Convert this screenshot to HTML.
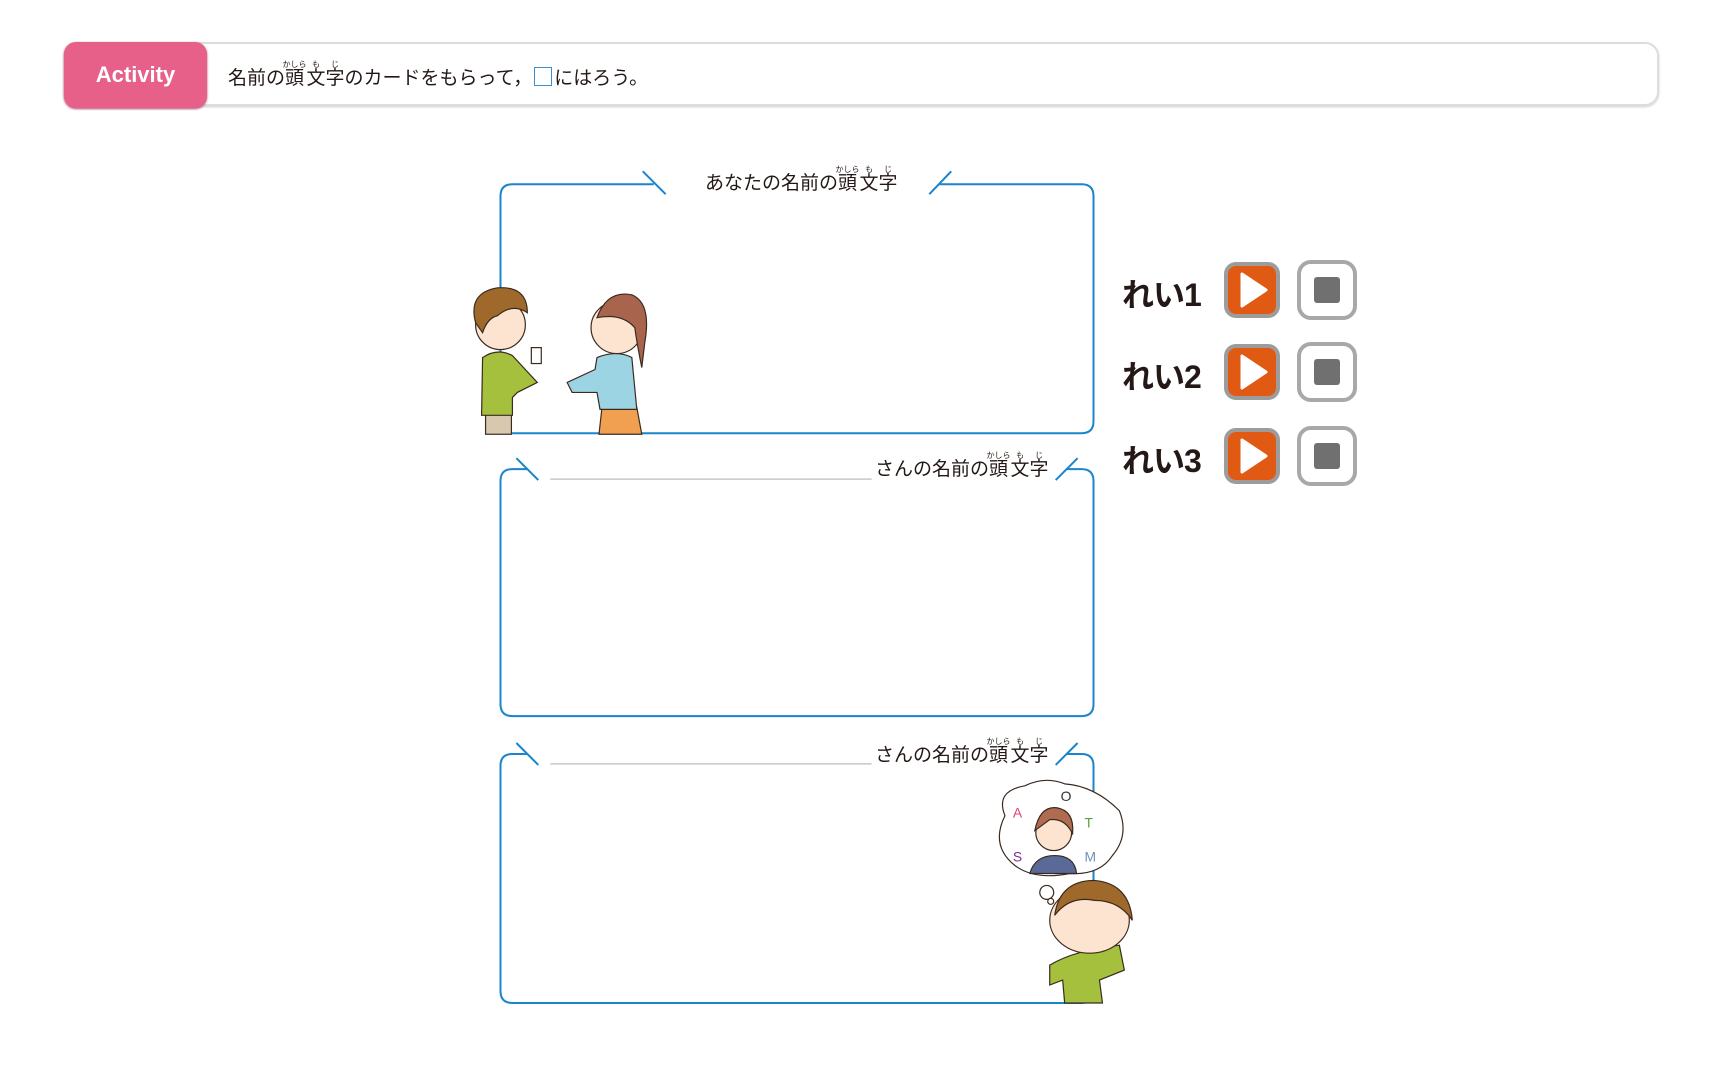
<!DOCTYPE html>
<html><head><meta charset="utf-8"><style>
body{margin:0;width:1724px;height:1080px;background:#fff;position:relative;overflow:hidden;font-family:"Liberation Sans","Noto Sans CJK JP",sans-serif;color:#231815}
.a{position:absolute}
.hdr{left:64px;top:42px;width:1602px;height:64px;border:2px solid #ddd;border-radius:14px;box-sizing:border-box;box-shadow:0 1px 2px #ccc}
.pill{left:64px;top:42px;width:143px;height:66px;background:#e6608a;border-radius:12px;color:#fff;font-weight:bold;font-size:22px;line-height:66px;text-align:center;box-shadow:0 1px 2px #b04a6a}
.t{font-size:19px;white-space:nowrap}
ruby rt{font-size:8px}
.lbl{font-size:19px;white-space:nowrap}
.rei{font-size:32px;font-weight:bold;letter-spacing:-1px}
.play{width:56px;height:56px;background:#e05a14;border:4px solid #9c9c9c;border-radius:12px;box-sizing:border-box}
.stop{width:60px;height:60px;background:#fff;border:4px solid #a8a8a8;border-radius:14px;box-sizing:border-box}
.stop i{position:absolute;left:13px;top:13px;width:26px;height:26px;background:#707070;border-radius:3px}
</style></head><body>
<div class="a hdr" style="width:1595px"></div>
<div class="a pill">Activity</div>
<div class="a t" style="left:228px;top:60px">名前の<ruby>頭<rt>かしら</rt>文<rt>も</rt>字<rt>じ</rt></ruby>のカードをもらって，<span style="display:inline-block;width:16px;height:17px;border:1.5px solid #3a8fd0;vertical-align:-2px;margin:0 2px"></span>にはろう。</div>

<svg class="a" style="left:0;top:0" width="1724" height="1080">
<g transform="translate(0,-1) scale(0.995,0.996)">
<g fill="none" stroke="#1a84cc" stroke-width="2">
<path d="M657 186 H515 Q503 186 503 198 V424 Q503 436 515 436 H1087 Q1099 436 1099 424 V198 Q1099 186 1087 186 H944"/>
<path d="M646 173 L669 196 M934 196 L956 173"/>
<path d="M530 472 H515 Q503 472 503 484 V708 Q503 720 515 720 H1087 Q1099 720 1099 708 V484 Q1099 472 1087 472 H1072"/>
<path d="M519 461 L541 483 M1061 483 L1083 461"/>
<path d="M530 758 H515 Q503 758 503 770 V996 Q503 1008 515 1008 H1087 Q1099 1008 1099 996 V770 Q1099 758 1087 758 H1072"/>
<path d="M519 747 L541 769 M1061 769 L1083 747"/>
</g>
<path d="M553 482 H876 M553 768 H876" stroke="#c8c8c8" stroke-width="1.5"/>
<g stroke="#3a2a20" stroke-width="1.2">
<rect x="488" y="415" width="26" height="22" fill="#d8c8b0"/>
<path d="M485 360 Q500 350 515 358 L540 385 L520 395 L515 400 L515 418 L484 418 Z" fill="#a4c03c"/>
<circle cx="503" cy="327" r="25" fill="#fce4d0"/>
<path d="M478 325 Q470 295 500 290 Q530 288 530 315 Q515 305 500 318 Q490 320 485 335 Z" fill="#a0692c"/>
<rect x="534" y="350" width="10" height="16" fill="#fff"/>
<path d="M605 410 L640 410 L645 437 L602 437 Z" fill="#f0a050"/>
<path d="M600 360 Q620 352 635 360 L640 412 L603 412 L600 395 L575 395 L570 385 L598 372 Z" fill="#9cd4e4"/>
<circle cx="620" cy="330" r="26" fill="#fce4d0"/>
<path d="M600 320 Q610 292 635 297 Q655 305 648 345 L645 370 Q640 345 638 330 Q625 315 600 320 Z" fill="#a8644c"/>
</g>
<g stroke="#3a2a20" stroke-width="1.2">
<path d="M1010 820 Q1000 795 1030 790 Q1050 780 1070 788 Q1100 790 1125 815 Q1135 840 1118 860 Q1105 880 1075 878 Q1040 885 1020 870 Q995 850 1010 820 Z" fill="#fff"/>
<circle cx="1052" cy="897" r="7" fill="#fff"/><circle cx="1056" cy="906" r="3" fill="#fff"/>
<path d="M1035 878 Q1040 860 1060 860 Q1080 860 1082 878 Z" fill="#5a6a98"/>
<circle cx="1059" cy="837" r="18" fill="#fce4d0"/>
<path d="M1040 835 Q1045 810 1062 812 Q1080 815 1078 838 Q1070 822 1055 824 Z" fill="#b06c50"/>
<path d="M1055 970 Q1080 955 1125 950 L1130 975 L1105 985 L1108 1008 L1070 1008 L1068 985 L1055 990 Z" fill="#a4c03c"/>
<ellipse cx="1095" cy="925" rx="40" ry="33" fill="#fce4d0"/>
<path d="M1060 920 Q1065 885 1100 885 Q1135 888 1138 925 Q1125 905 1100 905 Q1075 900 1060 920 Z" fill="#a0692c"/>
</g>
<g font-size="14" font-family="Liberation Sans">
<text x="1018" y="822" fill="#e04080">A</text><text x="1066" y="805" fill="#333">O</text><text x="1090" y="832" fill="#60a040">T</text><text x="1018" y="866" fill="#803090">S</text><text x="1090" y="866" fill="#7090c0">M</text>
</g>
</g>
</svg>

<div class="a lbl" style="left:705px;top:165px">あなたの名前の<ruby>頭<rt>かしら</rt>文<rt>も</rt>字<rt>じ</rt></ruby></div>
<div class="a lbl" style="left:875px;top:451px">さんの名前の<ruby>頭<rt>かしら</rt>文<rt>も</rt>字<rt>じ</rt></ruby></div>
<div class="a lbl" style="left:875px;top:737px">さんの名前の<ruby>頭<rt>かしら</rt>文<rt>も</rt>字<rt>じ</rt></ruby></div>

<div class="a rei" style="left:1122px;top:270px">れい1</div>
<div class="a rei" style="left:1122px;top:352px">れい2</div>
<div class="a rei" style="left:1122px;top:436px">れい3</div>

<div class="a play" style="left:1224px;top:262px"><svg width="48" height="48" style="position:absolute;left:0;top:0"><path d="M14 8 L38 24 L14 40 Z" fill="#fff" stroke="#fff" stroke-width="3" stroke-linejoin="round"/></svg></div>
<div class="a stop" style="left:1297px;top:260px"><i></i></div>
<div class="a play" style="left:1224px;top:344px"><svg width="48" height="48" style="position:absolute;left:0;top:0"><path d="M14 8 L38 24 L14 40 Z" fill="#fff" stroke="#fff" stroke-width="3" stroke-linejoin="round"/></svg></div>
<div class="a stop" style="left:1297px;top:342px"><i></i></div>
<div class="a play" style="left:1224px;top:428px"><svg width="48" height="48" style="position:absolute;left:0;top:0"><path d="M14 8 L38 24 L14 40 Z" fill="#fff" stroke="#fff" stroke-width="3" stroke-linejoin="round"/></svg></div>
<div class="a stop" style="left:1297px;top:426px"><i></i></div>
</body></html>
